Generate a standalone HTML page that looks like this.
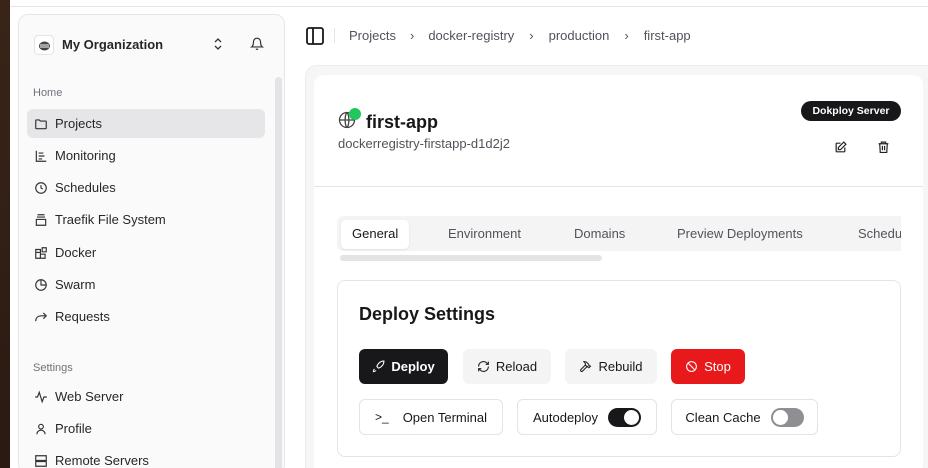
<!DOCTYPE html>
<html style="overflow:hidden;height:468px"><head><style>
*{box-sizing:border-box;margin:0;padding:0}
body{width:928px;height:468px;overflow:hidden;background:#fff;font-family:"Liberation Sans",sans-serif;color:#18181b;position:relative}
.abs{position:absolute}
.strip{left:0;top:0;width:10px;height:468px;background:linear-gradient(#3a2418,#2a1a12)}
.topline{left:10px;top:0;width:918px;height:7px;background:#fff;border-bottom:1px solid #e4e4e7}
.side{left:18px;top:14px;width:267px;height:460px;background:#fafafa;border:1px solid #e6e6e6;border-radius:10px}
.nav{position:absolute;left:8px;width:238px;height:29px;display:flex;align-items:center;font-size:13px;color:#27272a}
.nav svg{margin:0 7px 0 7px}
.lbl{position:absolute;left:14px;font-size:11px;color:#71717a}
.btn{position:absolute;height:35px;border-radius:6px;display:flex;align-items:center;justify-content:center;font-size:13px;font-weight:bold;gap:6px}
.obtn{position:absolute;top:399px;height:36px;border:1px solid #e4e4e7;border-radius:6px;display:flex;align-items:center;justify-content:center;font-size:13px;gap:10px;color:#18181b}
.tog{width:33px;height:19px;border-radius:10px;position:relative}
.tog i{position:absolute;top:2px;width:15px;height:15px;border-radius:50%;background:#fff}
.tab{position:absolute;top:226px;font-size:13px;color:#52525b}
</style></head><body>
<div class="abs strip"></div>
<div class="abs topline"></div>
<div class="abs side">
 <div class="abs" style="left:15px;top:20px;width:20px;height:20px;border:1px solid #e4e4e7;border-radius:4px;background:#fff;display:flex;align-items:center;justify-content:center"><svg width="13" height="11" viewBox="0 0 13 11"><ellipse cx="6.5" cy="6" rx="5.5" ry="4.5" fill="#444"/><path d="M2 5h9M2 7h9" stroke="#fff" stroke-width="1"/></svg></div>
 <div class="abs" style="left:43px;top:22px;font-size:13px;font-weight:bold;color:#27272a">My Organization</div>
 <svg class="abs" style="left:194px;top:22px" width="10" height="14" viewBox="0 0 10 14"><path d="M2 5l3-3 3 3M2 9l3 3 3-3" fill="none" stroke="#333" stroke-width="1.3"/></svg>
 <svg class="abs" style="left:231px;top:22px" width="14" height="14" viewBox="0 0 24 24"><path d="M6 8a6 6 0 0112 0c0 7 3 9 3 9H3s3-2 3-9M10 21h4" fill="none" stroke="#333" stroke-width="2"/></svg>
 <div class="abs" style="left:256px;top:62px;width:7px;height:400px;background:#e4e4e7;border-radius:4px"></div>
 <div class="lbl" style="top:72px">Home</div>
 <div class="nav" style="top:94px;background:#e6e6e8;border-radius:6px"><svg width="14" height="14" viewBox="0 0 24 24"><path d="M3 6a1 1 0 011-1h5l2 2h9a1 1 0 011 1v11a1 1 0 01-1 1H4a1 1 0 01-1-1z" fill="none" stroke="#333" stroke-width="2"/></svg>Projects</div>
 <div class="nav" style="top:126px"><svg width="14" height="14" viewBox="0 0 24 24"><path d="M4 3v18h17M8 7h8M8 12h10M8 17h6" fill="none" stroke="#333" stroke-width="2"/></svg>Monitoring</div>
 <div class="nav" style="top:158px"><svg width="14" height="14" viewBox="0 0 24 24"><circle cx="12" cy="12" r="9" fill="none" stroke="#333" stroke-width="2"/><path d="M12 7v5l3 2" fill="none" stroke="#333" stroke-width="2"/></svg>Schedules</div>
 <div class="nav" style="top:190px"><svg width="14" height="14" viewBox="0 0 24 24"><path d="M6 3h12M5 7h14M4 11h16v10H4z" fill="none" stroke="#333" stroke-width="2"/></svg>Traefik File System</div>
 <div class="nav" style="top:223px"><svg width="14" height="14" viewBox="0 0 24 24"><path d="M3 11h8v10H3zM11 14h8v7h-8zM3 11V6h8v5M14 3h7v7h-7z" fill="none" stroke="#333" stroke-width="2"/></svg>Docker</div>
 <div class="nav" style="top:255px"><svg width="14" height="14" viewBox="0 0 24 24"><path d="M21 12A9 9 0 1112 3M12 3a9 9 0 019 9h-9z" fill="none" stroke="#333" stroke-width="2"/></svg>Swarm</div>
 <div class="nav" style="top:287px"><svg width="14" height="14" viewBox="0 0 24 24"><path d="M3 19c0-6 4-9 10-9h8M16 5l5 5-5 5" fill="none" stroke="#333" stroke-width="2"/></svg>Requests</div>
 <div class="lbl" style="top:347px">Settings</div>
 <div class="nav" style="top:367px"><svg width="14" height="14" viewBox="0 0 24 24"><path d="M2 12h4l3-8 5 16 3-8h5" fill="none" stroke="#333" stroke-width="2"/></svg>Web Server</div>
 <div class="nav" style="top:399px"><svg width="14" height="14" viewBox="0 0 24 24"><circle cx="12" cy="8" r="4" fill="none" stroke="#333" stroke-width="2"/><path d="M5 21c0-4 3-7 7-7s7 3 7 7" fill="none" stroke="#333" stroke-width="2"/></svg>Profile</div>
 <div class="nav" style="top:431px"><svg width="14" height="14" viewBox="0 0 24 24"><path d="M3 3h18v8H3zM3 13h18v8H3z" fill="none" stroke="#333" stroke-width="2"/></svg>Remote Servers</div>
</div>
<svg class="abs" style="left:306px;top:27px" width="18" height="18" viewBox="0 0 18 18"><rect x="1" y="1" width="16" height="16" rx="2" fill="none" stroke="#18181b" stroke-width="1.8"/><path d="M7 1v16" stroke="#18181b" stroke-width="1.8"/></svg>
<div class="abs" style="left:334px;top:28px;width:1px;height:15px;background:#e4e4e7"></div>
<div class="abs" style="left:349px;top:28px;font-size:13px;color:#52525b;white-space:nowrap">Projects<span style="margin:0 14px">›</span>docker-registry<span style="margin:0 15px">›</span>production<span style="margin:0 15px">›</span>first-app</div>
<div class="abs" style="left:305px;top:65px;width:640px;height:420px;background:#f6f6f6;border:1px solid #ececec;border-radius:12px"></div>
<div class="abs" style="left:314px;top:75px;width:609px;height:400px;background:#fff;border-radius:10px"></div>
<svg class="abs" style="left:337px;top:110px" width="20" height="20" viewBox="0 0 24 24"><circle cx="12" cy="12" r="9" fill="none" stroke="#444" stroke-width="1.6"/><path d="M3 12h18M12 3c-3 3-3 15 0 18M12 3c3 3 3 15 0 18" fill="none" stroke="#444" stroke-width="1.6"/></svg>
<div class="abs" style="left:349px;top:108px;width:12px;height:12px;border-radius:50%;background:#22c55e"></div>
<div class="abs" style="left:366px;top:112px;font-size:18px;font-weight:bold">first-app</div>
<div class="abs" style="left:338px;top:136px;font-size:13px;color:#52525b">dockerregistry-firstapp-d1d2j2</div>
<div class="abs" style="left:801px;top:101px;width:100px;height:20px;border-radius:10px;background:#18181b;color:#fff;font-size:10.5px;font-weight:bold;display:flex;align-items:center;justify-content:center">Dokploy Server</div>
<svg class="abs" style="left:834px;top:141px" width="13" height="13" viewBox="0 0 24 24"><path d="M12 4H5a1 1 0 00-1 1v14a1 1 0 001 1h14a1 1 0 001-1v-7M18 2l4 4-10 10H8v-4z" fill="none" stroke="#222" stroke-width="2.2"/></svg>
<svg class="abs" style="left:877px;top:140px" width="13" height="14" viewBox="0 0 24 24"><path d="M3 6h18M8 6V3h8v3M5 6l1 16h12l1-16M10 10v8M14 10v8" fill="none" stroke="#222" stroke-width="2.2"/></svg>
<div class="abs" style="left:314px;top:186px;width:609px;height:1px;background:#e4e4e7"></div>
<div class="abs" style="left:337px;top:216px;width:564px;height:35px;background:#f4f4f5;border-radius:6px 0 0 6px"></div>
<div class="abs" style="left:341px;top:220px;width:68px;height:29px;background:#fff;border-radius:5px;box-shadow:0 1px 2px rgba(0,0,0,.08)"></div>
<div class="tab" style="left:352px;color:#18181b">General</div>
<div class="tab" style="left:448px">Environment</div>
<div class="tab" style="left:574px">Domains</div>
<div class="tab" style="left:677px">Preview Deployments</div>
<div class="abs" style="left:858px;top:216px;width:43px;height:35px;overflow:hidden"><div style="position:absolute;left:0;top:10px;font-size:13px;color:#52525b">Schedules</div></div>
<div class="abs" style="left:340px;top:255px;width:262px;height:6px;background:#e4e4e7;border-radius:3px"></div>
<div class="abs" style="left:337px;top:280px;width:564px;height:177px;border:1px solid #e4e4e7;border-radius:8px"></div>
<div class="abs" style="left:359px;top:304px;font-size:18px;font-weight:bold">Deploy Settings</div>
<div class="btn" style="left:359px;top:349px;width:89px;background:#18181b;color:#fff"><svg width="13" height="13" viewBox="0 0 24 24"><path d="M4.5 16.5c-1.5 1.3-2 5-2 5s3.7-.5 5-2M12 15l-3-3a22 22 0 012-4A13 13 0 0122 2c0 2.7-.8 7.5-6 11a22 22 0 01-4 2z" fill="none" stroke="#fff" stroke-width="2"/></svg>Deploy</div>
<div class="btn" style="left:463px;top:349px;width:88px;background:#f4f4f5;font-weight:normal"><svg width="13" height="13" viewBox="0 0 24 24"><path d="M3 12a9 9 0 0115-6.7L21 8M21 3v5h-5M21 12a9 9 0 01-15 6.7L3 16M3 21v-5h5" fill="none" stroke="#222" stroke-width="2"/></svg>Reload</div>
<div class="btn" style="left:565px;top:349px;width:92px;background:#f4f4f5;font-weight:normal"><svg width="13" height="13" viewBox="0 0 24 24"><path d="M15 12l-8.5 8.5a2.1 2.1 0 01-3-3L12 9M17.6 15L22 10.6M20 11.5L18 9.5V8l-3-3a6 6 0 00-4-2h-2l1 1a7 7 0 012 4.5v1l2 2h1.4l2 2" fill="none" stroke="#222" stroke-width="2"/></svg>Rebuild</div>
<div class="btn" style="left:671px;top:349px;width:74px;background:#e8191b;color:#fff;font-weight:normal"><svg width="13" height="13" viewBox="0 0 24 24"><circle cx="12" cy="12" r="9" fill="none" stroke="#fff" stroke-width="2"/><path d="M5.6 5.6l12.8 12.8" stroke="#fff" stroke-width="2"/></svg>Stop</div>
<div class="obtn" style="left:359px;width:144px;gap:14px"><span style="font-size:12px">&gt;_</span>Open Terminal</div>
<div class="obtn" style="left:517px;width:140px"><span>Autodeploy</span><div class="tog" style="background:#18181b"><i style="left:16px"></i></div></div>
<div class="obtn" style="left:671px;width:147px"><span>Clean Cache</span><div class="tog" style="background:#8e8e93"><i style="left:2px"></i></div></div>
</body></html>
